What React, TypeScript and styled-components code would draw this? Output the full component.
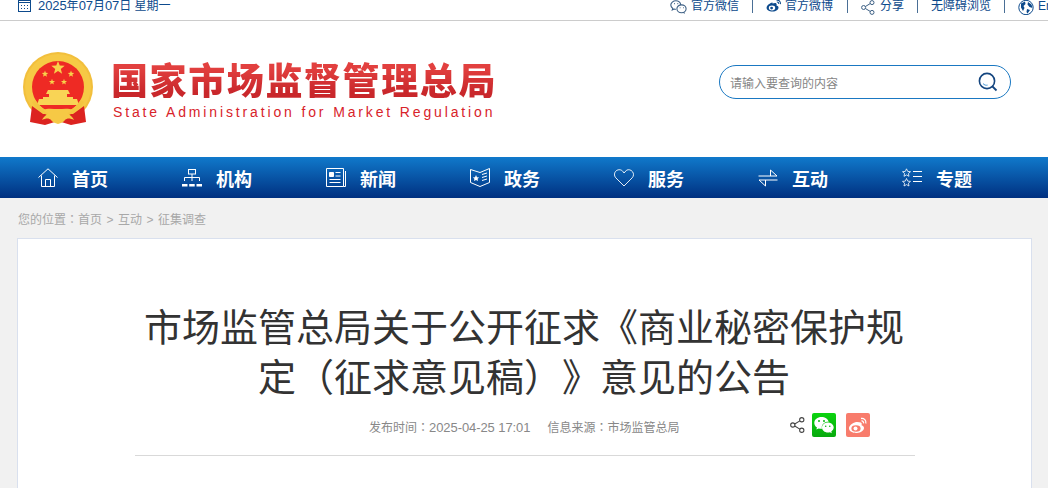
import React from "react";
import styled, { createGlobalStyle } from "styled-components";

const GlobalStyle = createGlobalStyle`
  html, body {
    margin: 0;
    padding: 0;
    background: #f1f1f1;
    overflow: hidden;
    font-family: "Liberation Sans", "Noto Sans CJK SC", sans-serif;
  }
`;

const Page = styled.div`
  width: 1048px;
  height: 488px;
  overflow: hidden;
`;

const TopBar = styled.div`
  display: flex;
  height: 20px;
  background: #fff;
  border-bottom: 1px solid #ccc;
  overflow: hidden;
  font-size: 12px;
  line-height: 12px;
  color: #0d4a8c;
`;

const DateBox = styled.div`
  flex: none;
  width: 670px;
  box-sizing: border-box;
  padding-left: 18px;
  display: flex;
  align-items: flex-start;
  gap: 7px;
`;

const TopLinks = styled.div`
  flex: none;
  display: flex;
  align-items: flex-start;
  height: 13px;
`;

const TopLink = styled.div<{ $last?: boolean; $gap?: number; $tail?: number }>`
  flex: none;
  display: flex;
  align-items: flex-start;
  gap: ${(p) => p.$gap ?? 4}px;
  height: 13px;
  white-space: nowrap;
  margin-right: 13px;
  padding-right: ${(p) => (p.$last ? 0 : p.$tail ?? 13)}px;
  border-right: ${(p) => (p.$last ? "none" : "1px solid #4a6f96")};
`;

// digits in the reference run wider than the CJK text around them
const Num = styled.span`
  font-size: 13px;
  letter-spacing: -0.08px;
`;

const Punct = styled.span`
  font-family: "Noto Sans CJK TC", sans-serif;
`;

const Masthead = styled.div`
  height: 136px;
  background: #fff;
  display: flex;
  align-items: center;
  padding: 0 37px 0 23px;
`;

const Brand = styled.div`
  display: flex;
  align-items: center;
  gap: 18px;
  flex: 1;
`;

const BrandText = styled.div`
  display: flex;
  flex-direction: column;
  margin-top: 2px;
`;

const BrandName = styled.div`
  font-family: "Noto Sans CJK SC", sans-serif;
  font-weight: 900;
  font-size: 37px;
  line-height: 38px;
  letter-spacing: 1.6px;
  white-space: nowrap;
  color: #d5302f;
  background: linear-gradient(#e2403f 20%, #c9272b 85%);
  -webkit-background-clip: text;
  background-clip: text;
  -webkit-text-fill-color: transparent;
`;

const BrandEnglish = styled.div`
  font-family: "Liberation Sans", sans-serif;
  font-size: 14px;
  line-height: 18px;
  margin-top: 5px;
  margin-left: 2px;
  letter-spacing: 2.86px;
  white-space: nowrap;
  color: #d8232a;
`;

const SearchBox = styled.div`
  width: 292px;
  height: 34px;
  margin-bottom: 14px;
  box-sizing: border-box;
  border: 1px solid #1a78c2;
  border-radius: 17px;
  display: flex;
  align-items: center;
  justify-content: space-between;
  padding: 0 12px 0 10px;
  font-size: 12px;
  color: #858585;
`;

const Nav = styled.nav`
  height: 41px;
  background: linear-gradient(#1079cb, #003080);
  display: flex;
  align-items: center;
  padding-left: 38px;
`;

const NavItem = styled.div`
  width: 144px;
  flex: none;
  display: flex;
  align-items: center;
  gap: 14px;
  color: #fff;
  font-family: "Noto Sans CJK SC", sans-serif;
  font-size: 18px;
  line-height: 24px;
  font-weight: 700;
`;

const Main = styled.main`
  padding: 0 16px 0 17px;
`;

const Crumbs = styled.div`
  height: 40px;
  box-sizing: border-box;
  padding: 13px 0 0 1px;
  font-size: 12px;
  line-height: 15px;
  color: #a8a8a8;
`;

const CrumbSep = styled.span`
  display: inline-block;
  width: 16px;
  text-align: center;
`;

const Card = styled.article`
  height: 300px;
  background: #fff;
  border: 1px solid #d9e0ee;
  padding: 61px 116px 0 117px;
`;

const Title = styled.h1`
  margin: 0 2px 0 0;
  text-align: center;
  font-family: "Noto Sans CJK SC", sans-serif;
  font-size: 38px;
  line-height: 50px;
  font-weight: 400;
  color: #333;
  text-spacing-trim: space-all;
  font-kerning: none;
`;

const MetaRow = styled.div`
  height: 43px;
  box-sizing: border-box;
  margin-top: 13px;
  border-bottom: 1px solid #d9d9d9;
  padding: 0 45px 0 234px;
  display: flex;
  align-items: flex-start;
  font-size: 12px;
  color: #888;
`;

const MetaText = styled.span`
  line-height: 28px;
  margin-right: 17px;
  white-space: nowrap;
`;

const ShareIcons = styled.div`
  margin-left: auto;
  display: flex;
  align-items: center;
  gap: 7px;
`;

const ShareTile = styled.div<{ $bg: string; $gap?: number }>`
  width: 24px;
  height: 24px;
  border-radius: 2px;
  background: ${(p) => p.$bg};
  margin-left: ${(p) => p.$gap ?? 0}px;
  display: flex;
  align-items: center;
  justify-content: center;
`;

const Star = ({ x, y, r, fill = "#f8d24a" }: { x: number; y: number; r: number; fill?: string }) => {
  const pts = Array.from({ length: 10 }, (_, i) => {
    const a = (Math.PI / 5) * i - Math.PI / 2;
    const d = i % 2 ? r * 0.42 : r;
    return `${(x + d * Math.cos(a)).toFixed(2)},${(y + d * Math.sin(a)).toFixed(2)}`;
  }).join(" ");
  return <polygon points={pts} fill={fill} />;
};

const Emblem = () => (
  <svg width="70" height="74" viewBox="0 0 70 74">
    <circle cx="35" cy="35" r="35" fill="#f2bf3c" />
    <circle cx="35" cy="35" r="33" fill="#f6c945" />
    <circle cx="35" cy="35" r="26" fill="#ee2a24" />
    <Star x={35} y={16} r={7} />
    <Star x={22} y={22} r={3.4} />
    <Star x={48} y={22} r={3.4} />
    <Star x={29} y={30} r={3.2} />
    <Star x={41} y={30} r={3.2} />
    <path d="M25 38H45L47 42H44V45H50V47H54L56 53H14L16 47H20V45H26V42H23Z" fill="#f9d455" />
    <path d="M9 54L7 70L22 73L35 69L48 73L63 70L61 54L50 62H20Z" fill="#dc2320" />
    <path d="M10.7 49A28 28 0 0 0 59.3 49" fill="none" stroke="#f4c540" strokeWidth="4" />
    <path d="M35 57C30 57 24 56 20 58C22 60 24 61 26 61C23 63 20 65 19 68C23 66 26 66 28 68C29 70 32 71 35 72C38 71 41 70 42 68C44 66 47 66 51 68C50 65 47 63 44 61C46 61 48 60 50 58C46 56 40 57 35 57Z" fill="#f6c945" />
  </svg>
);

const CalendarIcon = () => (
  <svg width="13" height="13" viewBox="0 0 13 13" fill="none" stroke="#0d4a8c" style={{ marginTop: -1 }}>
    <rect x="0.5" y="1.5" width="12" height="11" />
    <path d="M0.5 3.5H12.5M3 0V2M10 0V2M3 6.5h1M6 6.5h1M9 6.5h1M3 9.5h1M6 9.5h1M9 9.5h1" />
  </svg>
);

const WechatLine = () => (
  <svg width="17" height="14" viewBox="0 0 17 14" fill="none" stroke="#3c5f84" strokeWidth="1.1">
    <path d="M10.8 5C10.4 2.6 8.5 0.8 5.9 0.8 3.1 0.8 0.8 2.7 0.8 5.1c0 1.4 0.7 2.5 2 3.4L2.3 10l1.8-0.9c0.6 0.2 1.1 0.3 1.7 0.3" />
    <ellipse cx="11.5" cy="8.8" rx="4.6" ry="3.9" />
    <path d="M13.5 12.3l1.2 1.1" />
    <path d="M9.7 7.8h.8M13 7.8h.8M4 3.6h.8M7.4 3.6h.8" />
  </svg>
);

const WeiboSmall = () => (
  <svg width="16" height="13" viewBox="0 0 16 13" style={{ marginTop: -1 }}>
    <path d="M6.5 3.6C3.6 4.3 0.5 6.6 0.6 9c0.1 2.4 3.2 3.7 6.2 3.5 3.2-0.2 5.8-2 5.7-4.1-0.1-1.4-1.5-1.8-2-2 .3-.9.3-1.8-.5-2.2-1-.4-2.3.1-3.5.4z" fill="#0d4a8c" />
    <ellipse cx="6" cy="9" rx="3.2" ry="2.4" fill="#fff" />
    <circle cx="5.6" cy="9.1" r="1.4" fill="#0d4a8c" />
    <path d="M10.5 1.2c2.4-.5 4.4 1.5 3.8 4M10.8 3c1.2-.2 2 .8 1.8 1.9" fill="none" stroke="#0d4a8c" strokeWidth="1.1" />
  </svg>
);

const ShareLine = ({ color = "#3c5f84", size = 14 }: { color?: string; size?: number }) => (
  <svg width={size} height={size + 1} viewBox="0 0 14 15" fill="none" stroke={color} strokeWidth="1">
    <circle cx="2.6" cy="7.5" r="2" />
    <circle cx="11" cy="2.6" r="2" />
    <circle cx="11" cy="12.4" r="2" />
    <path d="M4.4 6.5L9.2 3.6M4.4 8.5L9.2 11.4" />
  </svg>
);

const GlobeIcon = () => (
  <svg width="16" height="15" viewBox="0 0 16 15">
    <circle cx="8" cy="7.5" r="7.2" fill="#fff" stroke="#0d4a8c" />
    <path d="M3 3.5L7 1.5 7.5 4 5.5 6 6.5 8 5 11 3 7.5zM10 2l3.5 2.5L14.5 8 11.5 7 9.5 4.5zM9 9l3 1-2.5 3.5L8.5 12z" fill="#0d4a8c" />
  </svg>
);

const SearchIcon = () => (
  <svg width="20" height="20" viewBox="0 0 20 20" fill="none" stroke="#14457f">
    <circle cx="9" cy="9" r="7.6" strokeWidth="1.6" />
    <path d="M14.5 14.5L18.5 18.5" strokeWidth="1.8" />
    <path d="M5 11.5c1.2 1.6 3 2 4.6 1.6" stroke="#4a9ad8" strokeWidth="1" />
  </svg>
);

const navStroke = { fill: "none", stroke: "#fff", strokeWidth: 1 };

const HomeIcon = () => (
  <svg width="20" height="19" viewBox="0 0 20 19" {...navStroke}>
    <path d="M0.5 9.5L10 0.8 19.5 9.5M3.5 7.5V18.5H16.5V7.5" />
    <path d="M7.5 18.5V11.5H12.5V18.5" />
  </svg>
);

const OrgIcon = () => (
  <svg width="20" height="18" viewBox="0 0 20 18" {...navStroke}>
    <rect x="6.5" y="0.5" width="7" height="4.5" />
    <path d="M10 5V12M2.5 12V8.5H17.5V12" />
    <path d="M0 15h5.5v2.5H0zM7.2 15h5.5v2.5H7.2zM14.5 15H20v2.5h-5.5z" fill="#fff" stroke="none" />
  </svg>
);

const NewsIcon = () => (
  <svg width="20" height="19" viewBox="0 0 20 19" {...navStroke}>
    <path d="M0.5 0.5H17.5V18.5H0.5zM19.5 3V18.5H17.5" />
    <path d="M3.5 4.5h4v4h-4z" fill="#fff" />
    <path d="M9.5 4.5h5M9.5 8h5M3.5 11.5h11M3.5 14.5h11" />
  </svg>
);

const PolicyIcon = () => (
  <svg width="20" height="19" viewBox="0 0 20 19" {...navStroke}>
    <path d="M0.5 1.5L10 4.5 19.5 0.5V14.5L10 18.5 0.5 14.5Z" />
    <path d="M12 6.5L17 5M12 9.5L17 8M12 12.5L17 11" />
    <polygon points="6,7 7,9.2 9.2,9.4 7.6,10.8 8,13 6,11.9 4,13 4.4,10.8 2.8,9.4 5,9.2" fill="#fff" stroke="none" />
  </svg>
);

const HeartIcon = () => (
  <svg width="20" height="18" viewBox="0 0 20 18" {...navStroke}>
    <path d="M10 17L1.8 8.8C-0.2 6.6 0.2 3.4 2.2 1.8 4.6 0 7.6 0.6 9 2.6L10 4 12.6 1.2C14.6 0.2 17 0.8 18.4 2.6 20 4.6 19.8 7 18.2 8.8Z" strokeWidth="0.9" />
  </svg>
);

const SwapIcon = () => (
  <svg width="20" height="18" viewBox="0 0 20 18" {...navStroke}>
    <path d="M0.5 7H19L12.5 1V7" />
    <path d="M19.5 11H1L7.5 17V11" />
  </svg>
);

const TopicIcon = () => (
  <svg width="20" height="19" viewBox="0 0 20 19" fill="none" stroke="#fff" strokeWidth="0.8">
    <polygon points="4.5,0.8 5.7,3.4 8.5,3.7 6.4,5.5 7,8.3 4.5,6.9 2,8.3 2.6,5.5 0.5,3.7 3.3,3.4" />
    <polygon points="4.5,10.5 5.7,13.1 8.5,13.4 6.4,15.2 7,18 4.5,16.6 2,18 2.6,15.2 0.5,13.4 3.3,13.1" />
    <path d="M11 3.5H20M11 8.5H20M11 13.5H20" strokeWidth="1" />
  </svg>
);

const WechatGlyph = () => (
  <svg width="20" height="18" viewBox="0 0 20 18">
    <path d="M7.5 1C3.4 1 .3 3.6.3 6.9c0 1.9 1 3.4 2.7 4.6l-.7 2.1 2.4-1.2c.9.2 1.7.4 2.7.4h.7c-.2-.5-.3-1-.3-1.6 0-3 2.7-5.5 6.2-5.5h.7C13.9 2.9 11 1 7.5 1z" fill="#fff" />
    <path d="M19.7 11.6c0-2.7-2.7-5-5.8-5-3.3 0-5.9 2.3-5.9 5 0 2.8 2.6 5 5.9 5 .7 0 1.4-.2 2-.4l1.9 1-.5-1.7c1.4-1 2.4-2.4 2.4-3.9z" fill="#fff" />
    <g fill="#09b90f">
      <circle cx="5" cy="5" r="1" />
      <circle cx="10" cy="5" r="1" />
      <circle cx="11.7" cy="10.3" r=".8" />
      <circle cx="15.8" cy="10.3" r=".8" />
    </g>
  </svg>
);

const WeiboGlyph = () => (
  <svg width="20" height="17" viewBox="0 0 20 17">
    <path d="M8 5C4.4 6 .8 8.8 1 11.6c.2 3 4.2 4.6 7.8 4.4 4.1-.2 7.3-2.6 7.2-5.2-.1-1.7-1.8-2.2-2.5-2.5.4-1.1.4-2.3-.6-2.8C11.6 5 9.5 4.7 8 5z" fill="#fff" />
    <ellipse cx="8" cy="11.5" rx="4.6" ry="3.2" fill="#f87c6c" />
    <circle cx="7.5" cy="11.6" r="2" fill="#fff" />
    <path d="M13 1.5c3-.6 5.6 2 4.8 5M13.5 4c1.4-.3 2.3 1 2 2.3" fill="none" stroke="#fff" strokeWidth="1.3" />
  </svg>
);

const navItems: [React.FC, string][] = [
  [HomeIcon, "首页"],
  [OrgIcon, "机构"],
  [NewsIcon, "新闻"],
  [PolicyIcon, "政务"],
  [HeartIcon, "服务"],
  [SwapIcon, "互动"],
  [TopicIcon, "专题"],
];

export default function App() {
  return (
    <Page>
      <GlobalStyle />
      <TopBar>
        <DateBox>
          <CalendarIcon />
          <span><Num>2025</Num>年<Num>07</Num>月<Num>07</Num>日 星期一</span>
        </DateBox>
        <TopLinks>
          <TopLink><WechatLine />官方微信</TopLink>
          <TopLink $gap={3} $tail={14}><WeiboSmall />官方微博</TopLink>
          <TopLink $gap={5}><ShareLine />分享</TopLink>
          <TopLink>无障碍浏览</TopLink>
          <TopLink $last><GlobeIcon />English</TopLink>
        </TopLinks>
      </TopBar>
      <Masthead>
        <Brand>
          <Emblem />
          <BrandText>
            <BrandName>国家市场监督管理总局</BrandName>
            <BrandEnglish>State Administration for Market Regulation</BrandEnglish>
          </BrandText>
        </Brand>
        <SearchBox>
          <span>请输入要查询的内容</span>
          <SearchIcon />
        </SearchBox>
      </Masthead>
      <Nav>
        {navItems.map(([Icon, label]) => (
          <NavItem key={label}>
            <Icon />
            {label}
          </NavItem>
        ))}
      </Nav>
      <Main>
        <Crumbs>
          您的位置<Punct>：</Punct>首页<CrumbSep>&gt;</CrumbSep>互动<CrumbSep>&gt;</CrumbSep>征集调查
        </Crumbs>
        <Card>
          <Title>
            市场监管总局关于公开征求《商业秘密保护规定<Punct>（</Punct>征求意见稿<Punct>）</Punct>》意见的公告
          </Title>
          <MetaRow>
            <MetaText>发布时间<Punct>：</Punct><Num>2025-04-25 17:01</Num></MetaText>
            <MetaText>信息来源<Punct>：</Punct>市场监管总局</MetaText>
            <ShareIcons>
              <ShareLine color="#444" size={15} />
              <ShareTile $bg="linear-gradient(#0bd40f, #08a90e)"><WechatGlyph /></ShareTile>
              <ShareTile $bg="#f87c6c" $gap={3}><WeiboGlyph /></ShareTile>
            </ShareIcons>
          </MetaRow>
        </Card>
      </Main>
    </Page>
  );
}
